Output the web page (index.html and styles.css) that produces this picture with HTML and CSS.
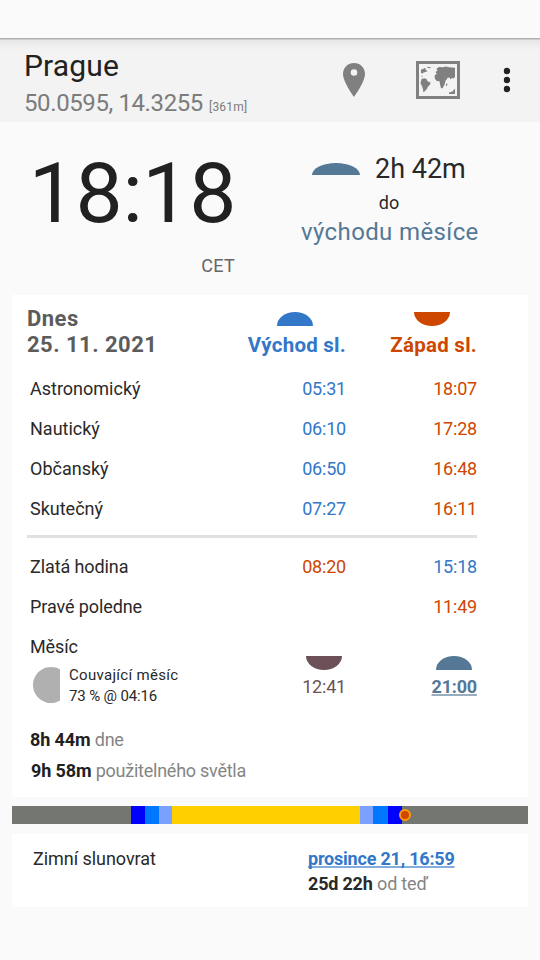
FILE: index.html
```html
<!DOCTYPE html>
<html lang="cs">
<head>
<meta charset="utf-8">
<title>Prague</title>
<link rel="stylesheet" href="styles.css">
</head>
<body>
<div class="status"></div>
<header class="appbar">
  <div class="place">
    <h1><span>Prague</span></h1>
    <p class="coords"><span>50.0595, 14.3255</span> <small>[361m]</small></p>
  </div>
  <svg class="pin" width="22" height="34" viewBox="0 0 22 34"><path fill="#808080" fill-rule="evenodd" d="M11 0C4.800 0 0 4.800 0 11c0 8 11 23 11 23s11-15 11-23C22 4.800 17.200 0 11 0zm0 6.200a3.300 3.300 0 1 1 0 6.600a3.300 3.300 0 0 1 0-6.600z"/></svg>
  <svg class="map" width="44" height="38" viewBox="0 0 44 38"><path fill="none" stroke="#808080" stroke-width="3" d="M1.500 1.500h41v35h-41z"/><g fill="#808080"><path d="M5 12V8.500L7 8l2-1.200L10 9l1.500 1.200L9.500 11l-2 .5-1 1zM5 14.500l2 .8-1 .7zM5.500 18l3-.8 2 .8 1 2.200 3 1.300-.4 2-2 2-1.300 2.500-2 2.200-1.500 1-.3-3-1-3-1.500-3zM18.500 15l1.500-2 3-.3 1 .8 3.500-.2 1.300 3 2.700 1.200-2 2.300-.5 2.500-.8 2-1.700 3h-1.500l-1-4-.5-3-2.700-.3-1.800-2zM19.500 11l2-1.200-1-2L23 6l4 .3L30 5.500l3 .8 6 .4v9l-1.500 2-1.500-1-1.500 1.700-1-2-2 .3-1 1.500-1.500-2.300-2-1.500-2 .5-1.500-1.500-2 .3zM10 5.800l4 .2 1 1-2 .3zM30 23l1.500-.5-.5 2-1 .7zM33 33v-1.500l3.500-1L39 27.500V33z"/></g></svg>
  <svg class="dots" width="8" height="26" viewBox="0 0 8 26"><g fill="#212121"><circle cx="4" cy="4" r="3.200"/><circle cx="4" cy="13" r="3.200"/><circle cx="4" cy="22" r="3.200"/></g></svg>
</header>
<section class="now">
  <div class="clock"><time>18:18</time><span class="zone">CET</span></div>
  <div class="next">
    <div class="remain"><i class="arc rise wide"></i><span>2h 42m</span></div>
    <div class="until">do</div>
    <div class="event"><span>východu měsíce</span></div>
  </div>
</section>
<main>
<section class="card day">
  <div class="head">
    <h2>Dnes<br><span>25. 11. 2021</span></h2>
    <div class="col blue"><i class="arc rise"></i><b>Východ sl.</b></div>
    <div class="col orange"><i class="arc set"></i><b>Západ sl.</b></div>
  </div>
  <div class="row"><span>Astronomický</span><span class="blue">05:31</span><span class="orange">18:07</span></div>
  <div class="row"><span>Nautický</span><span class="blue">06:10</span><span class="orange">17:28</span></div>
  <div class="row"><span>Občanský</span><span class="blue">06:50</span><span class="orange">16:48</span></div>
  <div class="row"><span>Skutečný</span><span class="blue">07:27</span><span class="orange">16:11</span></div>
  <hr>
  <div class="row tight"><span>Zlatá hodina</span><span class="orange">08:20</span><span class="blue">15:18</span></div>
  <div class="row tight"><span>Pravé poledne</span><span></span><span class="orange">11:49</span></div>
  <div class="moon">
    <div class="phase">
      <div class="title">Měsíc</div>
      <div class="detail">
        <svg width="28" height="36" viewBox="0 0 28 36"><path fill="#b0b0b0" d="M27 2.400A18 18 0 1 0 27 33.600z"/></svg>
        <p><span class="name">Couvající měsíc</span><br>73 % @ 04:16</p>
      </div>
    </div>
    <div class="col mauve"><i class="arc set"></i><span class="value">12:41</span></div>
    <div class="col steel"><i class="arc rise"></i><b class="link">21:00</b></div>
  </div>
  <p class="length"><b>8h 44m</b> dne</p>
  <p class="length usable"><b>9h 58m</b> použitelného světla</p>
</section>
<div class="timeline">
  <i class="night first"></i><i class="astro"></i><i class="naut"></i><i class="civil"></i><i class="sun"></i><i class="civil"></i><i class="naut late"></i><i class="astro"></i><i class="night"><span class="marker"></span></i>
</div>
<section class="card solstice">
  <span>Zimní slunovrat</span>
  <p><b class="link blue">prosince 21, 16:59</b><br><b>25d 22h</b> <span class="muted">od teď</span></p>
</section>
</main>
</body>
</html>
```
FILE: styles.css
```css
* { box-sizing: border-box; margin: 0; padding: 0; }
body { width: 540px; height: 960px; background: #fafafa; color: #292929; font: 18px/20px Roboto, "Noto Sans", sans-serif; overflow: hidden; }
b { font-weight: 700; }
i { display: block; }
.status { height: 38px; }
.appbar { height: 84px; display: flex; background: linear-gradient(#b0b0b0 0, #b0b0b0 1px, #e7e7e7 2px, #f3f3f3 12px); padding-left: 24px; }
.place { width: 319px; padding-top: 10px; }
h1 { font-size: 30px; line-height: 36px; font-weight: 400; letter-spacing: .15px; color: #212121; }
.coords { font-size: 24px; line-height: 38px; color: #7c7c7c; white-space: nowrap; letter-spacing: -.39px; }
.coords small { font-size: 12px; letter-spacing: .2px; margin-left: .5px; }
.pin { margin-top: 25px; }
.map { margin: 23px 0 0 51px; }
.dots { margin: 29px 0 0 43px; }
.now { height: 173px; display: flex; }
.clock { width: 235px; padding-top: 22px; display: flex; flex-direction: column; align-items: flex-end; }
.clock time { font-size: 84px; line-height: 100px; letter-spacing: -.4px; margin-right: -1px; color: #212121; }
.zone { color: #666; margin-top: 12px; letter-spacing: .3px; }
.next { margin-left: 67px; width: 178px; padding-top: 31px; }
.remain { display: flex; align-items: center; font-size: 27px; line-height: 32px; padding-left: 10px; gap: 15px; white-space: nowrap; }
.arc { width: 36px; height: 14px; background: currentColor; }
.arc.rise { border-radius: 50% 50% 0 0 / 100% 100% 0 0; }
.arc.set { border-radius: 0 0 50% 50% / 0 0 100% 100%; }
.arc.wide { width: 48px; height: 12px; color: #547896; }
.until { margin-top: 8px; text-align: center; line-height: 20px; padding-right: 4px; }
.event { color: #547896; font-size: 24px; line-height: 38px; white-space: nowrap; letter-spacing: .38px; margin-left: -1px; }
main { padding: 0 12px; }
.card { background: #fff; }
.day { height: 502px; padding: 10px 51px 0 15px; }
.head { display: flex; height: 64px; }
h2 { width: 190px; padding-top: 1px; font-size: 22px; line-height: 26px; color: #5c5c5c; letter-spacing: .47px; }
.col { display: flex; flex-direction: column; white-space: nowrap; }
.head .col { padding-top: 7px; width: 129px; font-size: 20.5px; line-height: 24px; text-align: right; align-items: flex-end; }
.head .col b { margin-top: 7px; letter-spacing: .25px; }
.head .blue .arc { margin-right: 33px; }
.head .orange .arc { margin-right: 27px; }
.head .orange { width: 131px; }
.blue { color: #3277c8; }
.orange { color: #cd4700; }
.mauve { color: #6d5158; }
.steel { color: #547896; }
.row { display: grid; grid-template-columns: 190px 126px 131px; line-height: 40px; height: 40px; padding-left: 3px; text-align: right; }
.row span:first-child { text-align: left; }
.row .blue, .row .orange, .value { letter-spacing: -.2px; }
.tight span:first-child { letter-spacing: -.1px; }
hr { border: 0; height: 3px; background: #e0e0e0; margin: 6px 0 9px; }
.moon { display: flex; height: 80px; padding-left: 3px; }
.phase { width: 190px; padding-top: 10px; }
.title { letter-spacing: -.1px; }
.detail { display: flex; align-items: flex-start; margin-top: 10px; padding-left: 3px; font-size: 15px; line-height: 21px; white-space: nowrap; letter-spacing: -.15px; }
.detail svg { width: 28px; margin-right: 8px; }
.detail p { margin-top: -2px; }
.name { letter-spacing: .3px; }
.moon .col { width: 126px; padding-top: 29px; align-items: flex-end; }
.moon .steel { width: 131px; }
.moon .arc { margin: 0 4px 7px 0; }
.moon .steel .arc { margin-right: 5px; }
.link { text-decoration: underline; text-decoration-color: color-mix(in srgb, currentColor 60%, transparent); text-decoration-thickness: 2px; text-underline-offset: 1px; text-decoration-skip-ink: none; letter-spacing: -.18px; }
.length { margin: 23px 0 0 3px; color: #858585; line-height: 20px; height: 21px; letter-spacing: -.25px; }
.length b { color: #212121; letter-spacing: -.1px; }
.length.usable { margin: 8px 0 0 4px; padding-top: 2px; }
.timeline { margin: 9px 0 10px; height: 18px; display: flex; }
.timeline i { width: 14px; }
.timeline .first { width: 119px; }
.night { background: #747672; flex: none; position: relative; }
.timeline .night:last-child { flex: 1; }
.astro { background: #00f; }
.naut { background: #07f; }
.timeline .late { width: 15px; }
.timeline .civil { width: 13px; background: #7aa1ff; }
.timeline .sun { width: 188px; background: #ffd000; }
.marker { position: absolute; left: -3px; top: 3px; width: 12px; height: 12px; border-radius: 50%; background: #cd4700; border: 2px solid #ff9900; }
.solstice { height: 73px; display: flex; padding: 12px 0 0 21px; line-height: 25px; }
.solstice > span { width: 275px; letter-spacing: -.05px; }
.solstice b { letter-spacing: -.2px; }
.muted { color: #858585; letter-spacing: -.2px; }
```
